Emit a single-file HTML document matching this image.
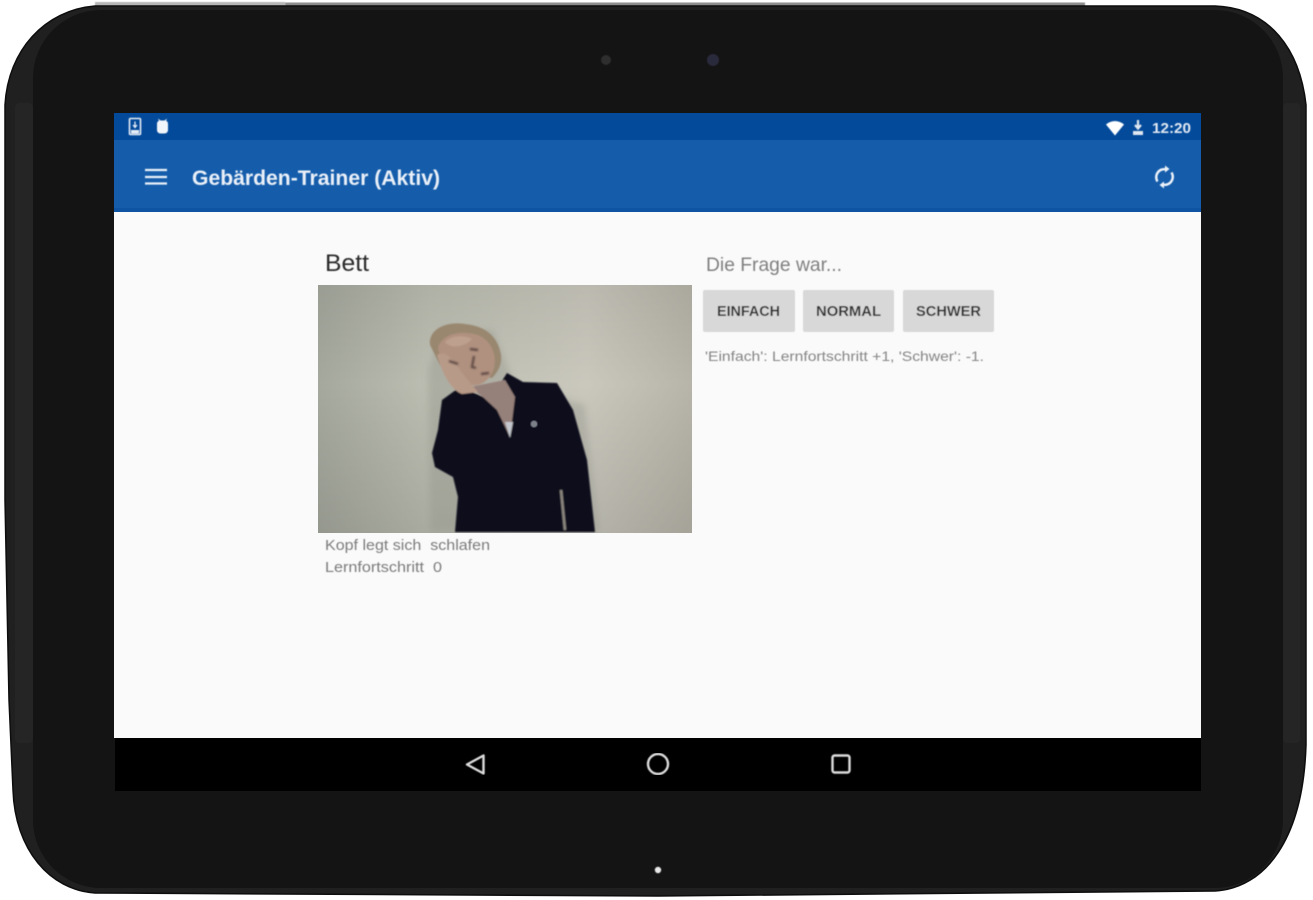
<!DOCTYPE html>
<html lang="de"><head><meta charset="utf-8"><title>Gebärden-Trainer</title>
<style>html,body{margin:0;padding:0;background:#fff;width:1313px;height:900px;overflow:hidden}svg{display:block}text{font-family:"Liberation Sans",sans-serif;white-space:pre}</style></head>
<body>
<svg width="1313" height="900" viewBox="0 0 1313 900" xmlns="http://www.w3.org/2000/svg">
<defs>
<filter id="b1" x="-5%" y="-5%" width="110%" height="110%"><feGaussianBlur stdDeviation="0.45"/></filter>
<filter id="b2" x="-10%" y="-10%" width="120%" height="120%"><feGaussianBlur stdDeviation="0.9"/></filter>
<filter id="b3" x="-30%" y="-30%" width="160%" height="160%"><feGaussianBlur stdDeviation="3.5"/></filter>
<linearGradient id="wall" x1="0" y1="0" x2="1" y2="0"><stop offset="0" stop-color="#a5a89d"/><stop offset=".3" stop-color="#bcbeb2"/><stop offset=".72" stop-color="#cac8bd"/><stop offset="1" stop-color="#b7b4a9"/></linearGradient>
<linearGradient id="wallv" x1="0" y1="0" x2="0" y2="1"><stop offset="0" stop-color="#000" stop-opacity=".07"/><stop offset=".4" stop-color="#000" stop-opacity="0"/><stop offset="1" stop-color="#000" stop-opacity=".1"/></linearGradient>
</defs>

<!-- tablet body -->
<rect x="95" y="2" width="190" height="6" fill="#b5b5b5" filter="url(#b1)"/>
<rect x="285" y="2.500" width="800" height="4" fill="#8a8a8a" filter="url(#b1)"/>
<path d="M95 6H1215C1270 8 1300 50 1306 105V745C1303 840 1265 888 1215 891L658 896 95 893C50 890 15 850 13 790L9 700 5 500V105C8 50 45 10 95 6Z" fill="#202020"/>
<path d="M95 6H1215C1270 8 1300 50 1306 105V745C1303 840 1265 888 1215 891L658 896 95 893C50 890 15 850 13 790L9 700 5 500V105C8 50 45 10 95 6Z" fill="none" stroke="#0d0d0d" stroke-width="1.500"/>
<rect x="33" y="10" width="1250" height="878" rx="68" ry="68" fill="#141414"/>
<!-- speaker grilles -->
<rect x="15" y="103" width="18" height="640" rx="4" fill="#252525"/>
<rect x="1283" y="103" width="17" height="640" rx="4" fill="#252525"/>
<path d="M23 110V735" stroke="#1c1c1c" stroke-width="5" stroke-dasharray="24 18" filter="url(#b1)"/>
<path d="M1292 110V735" stroke="#1c1c1c" stroke-width="5" stroke-dasharray="24 18" filter="url(#b1)"/>
<!-- cameras -->
<circle cx="606" cy="60" r="5" fill="#2e2e2e" filter="url(#b1)"/>
<circle cx="713" cy="60" r="6" fill="#2c2c3c" filter="url(#b1)"/>
<circle cx="658" cy="870" r="3.200" fill="#e8e8e8" filter="url(#b1)"/>

<!-- screen -->
<rect x="114" y="113" width="1087" height="27" fill="#034a9a"/>
<rect x="114" y="140" width="1087" height="72" fill="#155dab"/>
<rect x="114" y="208" width="1087" height="4" fill="#0f54a2"/>
<rect x="114" y="212" width="1087" height="526" fill="#fafafa"/>
<rect x="115" y="738" width="1086" height="53" fill="#000"/>

<!-- status bar icons -->
<g filter="url(#b1)">
<rect x="129.500" y="118.500" width="11" height="16" rx="1" fill="none" stroke="#e6edf6" stroke-width="1.600"/>
<path d="M135 121.500v5M133 125l2 2.500 2-2.500" stroke="#e6edf6" stroke-width="1.300" fill="none"/>
<rect x="131" y="130" width="8" height="3.500" fill="#e6edf6"/>
<path d="M157 124c0-2 1-3 2-3l-1-2.500 2.500 2h4l2.500-2-1 2.500c1 0 2 1 2 3v6c0 2-1.500 3.500-3.500 3.500h-4c-2 0-3.500-1.500-3.500-3.500z" fill="#f2f5fa"/>
<path d="M1106 124.500c5-4.500 13-4.500 18 0l-9 11z" fill="#fff"/>
<path d="M1138 120v8M1135 125l3 3.500 3-3.500" stroke="#dfe7f0" stroke-width="2.200" fill="none"/>
<rect x="1133" y="131" width="10" height="4" fill="#dfe7f0"/>
<!-- hamburger -->
<path d="M145 170h22M145 177h22M145 183.500h22" stroke="#e9f0f8" stroke-width="2.300"/>
<!-- sync -->
<path d="M1157.500 181.500a8 8 0 0 1 9-12M1171.500 172.500a8 8 0 0 1-9 12" fill="none" stroke="#eef3f9" stroke-width="2.400"/>
<path d="M1165 165.500l4.500 3.500-4.500 3.500zM1164 181.500l-4.500 3.500 4.500 3.500z" fill="#eef3f9"/>
</g>
<text x="1152" y="133" font-size="14.500" font-weight="700" fill="#e3eaf4" textLength="39" lengthAdjust="spacingAndGlyphs" filter="url(#b1)">12:20</text>
<text x="192" y="185" font-size="21.500" font-weight="700" fill="#eaf0f8" textLength="248" lengthAdjust="spacingAndGlyphs" filter="url(#b1)">Gebärden-Trainer (Aktiv)</text>

<!-- left column -->
<text x="325" y="271" font-size="24" fill="#2a2a2a" textLength="44" lengthAdjust="spacingAndGlyphs" filter="url(#b1)">Bett</text>

<!-- photo (illustrative) -->
<svg x="318" y="285" width="374" height="248" viewBox="318 285 374 248">
<rect x="318" y="285" width="374" height="248" fill="url(#wall)"/>
<rect x="318" y="285" width="374" height="248" fill="url(#wallv)"/>
<path d="M428 370l15 -40 50 0 22 55 70 20 14 127H430z" fill="#8f9086" opacity=".35" filter="url(#b3)"/>
<g filter="url(#b2)">
<path d="M442 400L460 387 490 400 507 373 523 382 557 383 573 410 587 460 595 532H455L458 497 453 477 435 467 432 453 438 430Z" fill="#0b0e1c"/>
<path d="M470 387L505 380 515 397 510 437 497 410 483 397Z" fill="#96807a"/>
<path d="M505 422L513 422 510 438Z" fill="#c4c8ce"/>
<path d="M430 345C428 330 445 321 465 324 485 326 498 336 501 355 502 365 498 372 492 378L440 365Z" fill="#99876f"/>
<path d="M438 348C442 333 462 330 478 335 492 341 497 356 494 368 490 382 478 388 468 384 452 378 441 365 438 348Z" fill="#b0917f"/>
<path d="M445 342C452 335 465 335 472 339 466 346 452 350 445 342Z" fill="#bea08e"/>
<path d="M437 355C445 350 452 358 458 367 465 377 472 385 478 392L462 394C452 390 444 378 437 355Z" fill="#b89a88"/>
<g filter="url(#b2)"><path d="M449 361l9 3M470 349l8 1M474 356l-2 11 4 1M481 374l8 -1" stroke="#5e4a44" stroke-width="2.400" fill="none"/></g>
<path d="M561 490l4 40" stroke="#8c8780" stroke-width="2.500"/>
</g>
<circle cx="534" cy="424" r="3.500" fill="#7c8088" filter="url(#b1)"/>
</svg>

<g filter="url(#b1)" fill="#7b7b7b">
<text x="325" y="550" font-size="14.500" textLength="165" lengthAdjust="spacingAndGlyphs">Kopf legt sich  schlafen</text>
<text x="325" y="572" font-size="14.500" textLength="117" lengthAdjust="spacingAndGlyphs">Lernfortschritt  0</text>
<text x="706" y="271" font-size="19.500" fill="#808080" textLength="136" lengthAdjust="spacingAndGlyphs">Die Frage war...</text>
<text x="705" y="361" font-size="14" fill="#858585" textLength="279" lengthAdjust="spacingAndGlyphs">'Einfach': Lernfortschritt +1, 'Schwer': -1.</text>
</g>

<!-- buttons -->
<g filter="url(#b1)">
<rect x="703" y="290" width="92" height="42" rx="2" fill="#d8d8d8"/>
<rect x="803" y="290" width="91" height="42" rx="2" fill="#d8d8d8"/>
<rect x="903" y="290" width="91" height="42" rx="2" fill="#d8d8d8"/>
<g font-size="14.500" font-weight="700" fill="#333">
<text x="717" y="316" textLength="63" lengthAdjust="spacingAndGlyphs">EINFACH</text>
<text x="816" y="316" textLength="65" lengthAdjust="spacingAndGlyphs">NORMAL</text>
<text x="916" y="316" textLength="65" lengthAdjust="spacingAndGlyphs">SCHWER</text>
</g>
</g>

<!-- nav bar -->
<g fill="none" stroke="#dcdcdc" stroke-width="2.400" stroke-linejoin="round" filter="url(#b1)">
<path d="M483.500 755.500V773.500L467 764.500Z"/>
<circle cx="658" cy="764" r="10"/>
<rect x="832.500" y="755.500" width="17" height="17" rx="2"/>
</g>
</svg>
</body></html>
